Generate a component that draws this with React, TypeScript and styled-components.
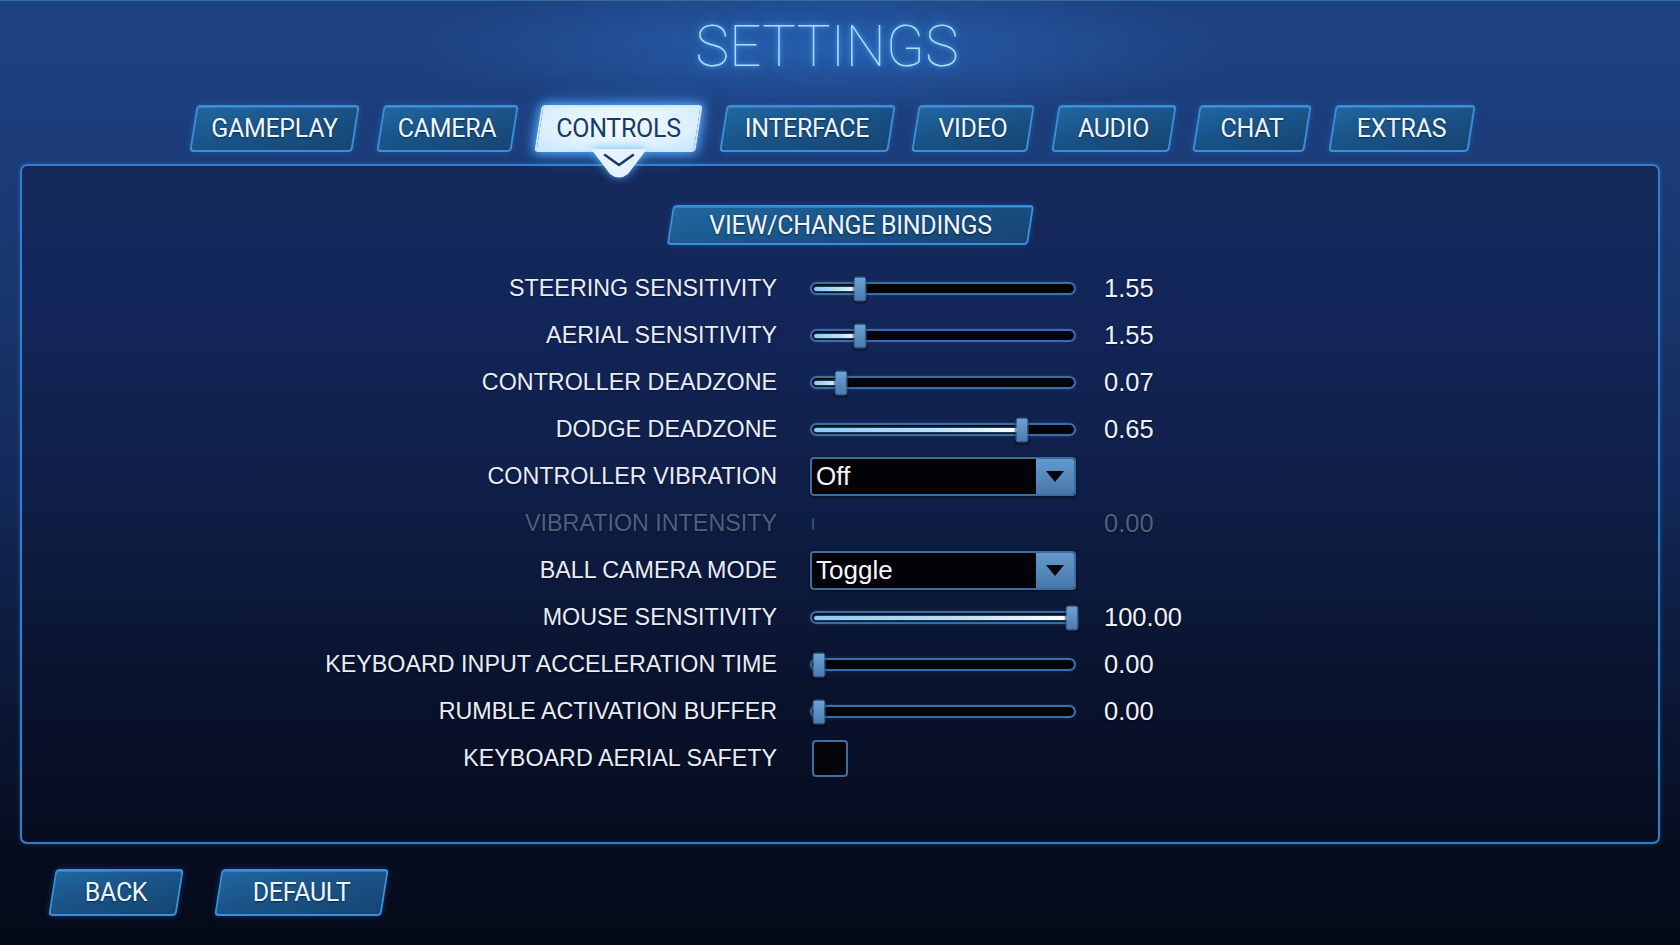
import React from 'react';
import styled, { createGlobalStyle, css } from 'styled-components';

const GlobalStyle = createGlobalStyle`
  html, body {
    margin: 0;
    padding: 0;
    background: #060b1a;
  }
  * {
    box-sizing: border-box;
  }
`;

type Row =
  | { kind: 'slider'; label: string; value: string; fill: number }
  | { kind: 'select'; label: string; option: string }
  | { kind: 'disabled'; label: string; value: string }
  | { kind: 'check'; label: string };

const tabs = [
  { name: 'GAMEPLAY', width: 163 },
  { name: 'CAMERA', width: 135 },
  { name: 'CONTROLS', width: 161 },
  { name: 'INTERFACE', width: 169 },
  { name: 'VIDEO', width: 116 },
  { name: 'AUDIO', width: 118 },
  { name: 'CHAT', width: 112 },
  { name: 'EXTRAS', width: 140 },
];

const rows: Row[] = [
  { kind: 'slider', label: 'STEERING SENSITIVITY', value: '1.55', fill: 0.165 },
  { kind: 'slider', label: 'AERIAL SENSITIVITY', value: '1.55', fill: 0.165 },
  { kind: 'slider', label: 'CONTROLLER DEADZONE', value: '0.07', fill: 0.09 },
  { kind: 'slider', label: 'DODGE DEADZONE', value: '0.65', fill: 0.82 },
  { kind: 'select', label: 'CONTROLLER VIBRATION', option: 'Off' },
  { kind: 'disabled', label: 'VIBRATION INTENSITY', value: '0.00' },
  { kind: 'select', label: 'BALL CAMERA MODE', option: 'Toggle' },
  { kind: 'slider', label: 'MOUSE SENSITIVITY', value: '100.00', fill: 1.02 },
  { kind: 'slider', label: 'KEYBOARD INPUT ACCELERATION TIME', value: '0.00', fill: 0 },
  { kind: 'slider', label: 'RUMBLE ACTIVATION BUFFER', value: '0.00', fill: 0 },
  { kind: 'check', label: 'KEYBOARD AERIAL SAFETY' },
];

export default function App() {
  const active = 'CONTROLS';
  return (
    <>
      <GlobalStyle />
      <Screen>
        <Title>SETTINGS</Title>
        <TabBar>
          {tabs.map((tab) => (
            <Tab key={tab.name} $width={tab.width} $active={tab.name === active}>
              {tab.name}
              {tab.name === active && (
                <Pointer width="56" height="30" viewBox="0 0 56 30">
                  <path d="M0 0 H56 L37 25 Q28 32 19 25 Z" fill="#e4f3ff" />
                  <path
                    d="M14 6 L28 16 L42 6"
                    fill="none"
                    stroke="#1a3b66"
                    strokeWidth="2.6"
                    strokeLinecap="round"
                    strokeLinejoin="round"
                  />
                </Pointer>
              )}
            </Tab>
          ))}
        </TabBar>

        <Panel>
          <BindingsWrap>
            <SlantButton $width={361} $height={40} $size={25}>
              VIEW/CHANGE BINDINGS
            </SlantButton>
          </BindingsWrap>
          <Rows>
            {rows.map((row) => (
              <SettingRow key={row.label}>
                <Label $dim={row.kind === 'disabled'}>{row.label}</Label>
                <Control>
                  {row.kind === 'slider' && <Slider fill={row.fill} />}
                  {row.kind === 'select' && <Select option={row.option} />}
                  {row.kind === 'disabled' && <DisabledMark />}
                  {row.kind === 'check' && <CheckBox />}
                </Control>
                <Value $dim={row.kind === 'disabled'}>
                  {'value' in row ? row.value : ''}
                </Value>
              </SettingRow>
            ))}
          </Rows>
        </Panel>

        <Footer>
          <SlantButton $width={128} $height={47} $size={25}>
            BACK
          </SlantButton>
          <SlantButton $width={167} $height={47} $size={25}>
            DEFAULT
          </SlantButton>
        </Footer>
      </Screen>
    </>
  );
}

function Slider({ fill }: { fill: number }) {
  const at = `calc(7px + ${fill} * (100% - 14px))`;
  return (
    <Track>
      <TrackFill style={{ width: `calc(${at} - 4px)` }} />
      <Thumb style={{ left: at }} />
    </Track>
  );
}

function Select({ option }: { option: string }) {
  return (
    <SelectBox>
      <SelectText>{option}</SelectText>
      <SelectArrow>
        <svg width="18" height="11" viewBox="0 0 18 11">
          <path d="M0 0 H18 L9 11 Z" fill="#05070c" />
        </svg>
      </SelectArrow>
    </SelectBox>
  );
}

const Screen = styled.div`
  width: 1680px;
  height: 945px;
  overflow: hidden;
  display: flex;
  flex-direction: column;
  border-top: 1px solid #2f7098;
  background:
    radial-gradient(ellipse 420px 70px at 49% 46px, rgba(46, 120, 210, 0.55), transparent),
    linear-gradient(
      180deg,
      #1e4180 0%,
      #1c3d7a 15%,
      #18356b 32%,
      #132a5b 50%,
      #0c1a3b 70%,
      #070e22 88%,
      #050a18 100%
    );
`;

const Title = styled.h1`
  margin: 0;
  padding: 16px 26px 0 0;
  height: 76px;
  line-height: 59px;
  text-align: center;
  font-family: Roboto, 'Noto Sans', sans-serif;
  font-weight: 100;
  font-size: 57px;
  color: #a9dcff;
  text-shadow:
    0 0 5px rgba(90, 180, 255, 0.95),
    0 0 16px rgba(60, 150, 255, 0.7);
`;

const TabBar = styled.nav`
  display: flex;
  gap: 23.5px;
  margin-top: 28px;
  padding-left: 193px;
  height: 47px;
  position: relative;
  z-index: 2;
`;

const slantFace = css`
  content: '';
  position: absolute;
  inset: 0;
  z-index: -1;
  transform: skewX(-9deg);
  border-radius: 4px;
  border: 2px solid #3b8ed8;
  background: linear-gradient(165deg, #2067a0 0%, #1a5488 45%, #154574 100%);
  box-shadow:
    0 0 6px rgba(40, 130, 230, 0.35),
    inset 0 1px 0 rgba(140, 200, 255, 0.25);
`;

const Tab = styled.div<{ $width: number; $active: boolean }>`
  position: relative;
  isolation: isolate;
  width: ${(p) => p.$width}px;
  height: 47px;
  display: flex;
  align-items: center;
  justify-content: center;
  font-family: Roboto, 'Noto Sans', sans-serif;
  font-size: 25px;
  letter-spacing: -0.3px;
  color: ${(p) => (p.$active ? '#173a68' : '#eef5ff')};
  text-shadow: ${(p) => (p.$active ? 'none' : '0 1px 2px rgba(0, 0, 0, 0.5)')};

  &::before {
    ${slantFace}
    ${(p) =>
      p.$active &&
      css`
        border-color: #c8e9ff;
        background: radial-gradient(ellipse at 50% 40%, #f4fbff 0%, #dff1ff 60%, #c9e6ff 100%);
        box-shadow:
          0 0 10px 2px rgba(90, 180, 255, 0.85),
          0 0 24px rgba(60, 150, 255, 0.5);
      `}
  }
`;

const Pointer = styled.svg`
  position: absolute;
  top: 44px;
  left: 50%;
  transform: translateX(-50%);
  filter: drop-shadow(0 0 5px rgba(90, 180, 255, 0.9));
`;

const Panel = styled.section`
  margin: 12px 20px 0;
  height: 680px;
  border: 2px solid #3180cc;
  border-radius: 7px;
  box-shadow: 0 0 4px rgba(50, 140, 230, 0.4);
  background: linear-gradient(
    180deg,
    #15295a 0%,
    #13265a 20%,
    #10204a 45%,
    #0c1838 65%,
    #09112a 82%,
    #070d20 100%
  );
  padding-top: 39px;
  position: relative;
  z-index: 1;
`;

const BindingsWrap = styled.div`
  display: flex;
  justify-content: center;
  padding-left: 21px;
`;

const SlantButton = styled.div<{ $width: number; $height: number; $size: number }>`
  position: relative;
  isolation: isolate;
  width: ${(p) => p.$width}px;
  height: ${(p) => p.$height}px;
  display: flex;
  align-items: center;
  justify-content: center;
  font-family: Roboto, 'Noto Sans', sans-serif;
  font-size: ${(p) => p.$size}px;
  letter-spacing: -0.3px;
  color: #eef5ff;
  text-shadow: 0 1px 2px rgba(0, 0, 0, 0.5);

  &::before {
    ${slantFace}
  }
`;

const Rows = styled.div`
  margin-top: 20px;
  display: flex;
  flex-direction: column;
`;

const SettingRow = styled.div`
  display: grid;
  grid-template-columns: 758px 266px 1fr;
  column-gap: 30px;
  align-items: center;
  height: 47px;
`;

const Label = styled.div<{ $dim: boolean }>`
  padding-right: 3px;
  text-align: right;
  font-family: 'Liberation Sans', Arial, sans-serif;
  font-size: 23.3px;
  color: ${(p) => (p.$dim ? 'rgba(130, 150, 180, 0.6)' : '#e7eef8')};
  text-shadow: 0 1px 2px rgba(0, 0, 0, 0.55);
  white-space: nowrap;
`;

const Value = styled.div<{ $dim: boolean }>`
  margin-left: -2px;
  font-family: 'Liberation Sans', Arial, sans-serif;
  font-size: 25.5px;
  color: ${(p) => (p.$dim ? 'rgba(130, 150, 180, 0.6)' : '#eef3fa')};
  text-shadow: 0 1px 2px rgba(0, 0, 0, 0.55);
`;

const Control = styled.div`
  display: flex;
  align-items: center;
  height: 47px;
`;

const Track = styled.div`
  position: relative;
  width: 100%;
  height: 13px;
  border-radius: 7px;
  border: 2px solid #3a6ea6;
  background: #02040a;
  box-shadow: 0 0 3px rgba(40, 110, 190, 0.5);
`;

const TrackFill = styled.div`
  position: absolute;
  left: 2px;
  top: 2.5px;
  height: 4px;
  border-radius: 2px;
  background: linear-gradient(90deg, #8ccaf4 0%, #b9e1ff 60%, #ffffff 100%);
  box-shadow: 0 0 3px rgba(120, 190, 255, 0.8);
`;

const Thumb = styled.div`
  position: absolute;
  top: 50%;
  width: 13px;
  height: 25px;
  transform: translate(-50%, -50%);
  border-radius: 3px;
  border: 1px solid #34628f;
  background: linear-gradient(180deg, #6ea3d3 0%, #5b8fc2 50%, #4b7cad 100%);
  box-shadow: 0 1px 2px rgba(0, 0, 0, 0.6);
`;

const SelectBox = styled.div`
  display: flex;
  width: 100%;
  height: 39px;
  border: 2px solid #3d6d9f;
  border-radius: 4px;
  background: #020307;
  overflow: hidden;
  box-shadow: 0 1px 3px rgba(0, 0, 0, 0.6);
`;

const SelectText = styled.div`
  flex: 1;
  padding-left: 4px;
  display: flex;
  align-items: center;
  font-family: 'Liberation Sans', Arial, sans-serif;
  font-size: 26px;
  color: #f4f7fb;
`;

const SelectArrow = styled.div`
  width: 38px;
  display: flex;
  align-items: center;
  justify-content: center;
  background: linear-gradient(180deg, #6399cc 0%, #5487bb 55%, #4677a9 100%);
`;

const DisabledMark = styled.div`
  width: 2px;
  height: 12px;
  margin-left: 2px;
  border-radius: 1px;
  background: rgba(60, 120, 190, 0.55);
`;

const CheckBox = styled.div`
  width: 36px;
  height: 37px;
  margin-left: 2px;
  border: 2px solid #3f6fa2;
  border-radius: 4px;
  background: #03050b;
`;

const Footer = styled.footer`
  display: flex;
  gap: 38px;
  margin-top: 25px;
  padding-left: 52px;
`;
